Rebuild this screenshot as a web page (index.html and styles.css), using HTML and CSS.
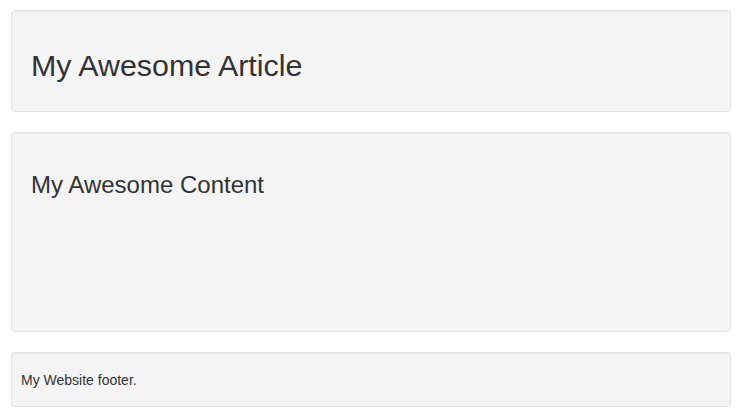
FILE: index.html
```html
<!DOCTYPE html>
<html>
<head>
<meta charset="utf-8">
<link rel="stylesheet" href="styles.css">
</head>
<body>
<div class="page">
  <header class="well well-header">
    <h1 class="title">My Awesome Article</h1>
  </header>
  <main class="well well-content">
    <h2 class="subtitle">My Awesome Content</h2>
  </main>
  <footer class="well well-footer">
    <p class="footer-text">My Website footer.</p>
  </footer>
</div>
</body>
</html>
```

FILE: styles.css
```css
html, body {
  margin: 0;
  padding: 0;
  background: #fff;
}
body {
  font-family: "Liberation Sans", Arial, sans-serif;
  font-size: 14px;
  line-height: 1.42857;
  color: #333;
}
.page {
  padding: 10px 13px 0 11px;
  display: flex;
  flex-direction: column;
  gap: 20px;
}
.well {
  background: #f4f4f4;
  border: 1px solid #e3e3e3;
  border-radius: 4px;
  box-shadow: inset 0 1px 1px rgba(0,0,0,.05);
  padding: 0 19px;
}
.title {
  font-size: 30.4px;
  font-weight: 500;
  line-height: 33px;
  margin: 38px 0 29px;
}
.well-content {
  height: 200px;
  box-sizing: border-box;
}
.subtitle {
  font-size: 24px;
  font-weight: 500;
  line-height: 26px;
  margin: 39px 0 0;
}
.well-footer {
  padding: 0 9px;
  border-radius: 3px;
}
.footer-text {
  margin: 8px 0 7px;
  padding: 9px 0;
  font-size: 14px;
  line-height: 20px;
}
```
